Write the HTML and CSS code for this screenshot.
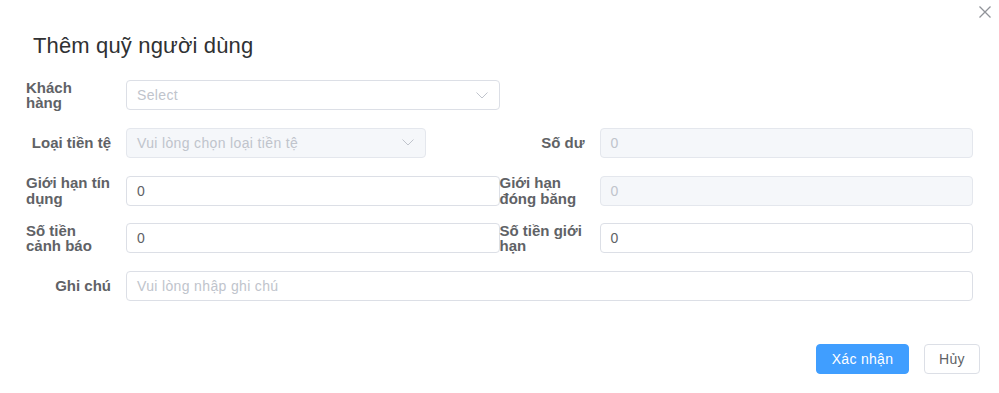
FILE: index.html
```html
<!DOCTYPE html>
<html lang="vi">
<head>
<meta charset="utf-8">
<title>Thêm quỹ người dùng</title>
<link rel="stylesheet" href="styles.css">
</head>
<body>
<div class="dialog">
  <button class="close" type="button" aria-label="Đóng">
    <svg width="12" height="12" viewBox="0 0 12 12"><path d="M0.5 0.5 L11.5 11.5 M11.5 0.5 L0.5 11.5" stroke="#909399" stroke-width="1.3" fill="none"/></svg>
  </button>
  <div class="header"><h2 class="title">Thêm quỹ người dùng</h2></div>
  <form class="form">
    <div class="item">
      <label class="label"><span>Khách hàng</span></label>
      <div class="control">
        <div class="input select"><span class="placeholder">Select</span>
          <svg class="chev" width="12" height="7" viewBox="0 0 12 7"><polyline points="0.5,0.5 6,6 11.5,0.5" fill="none" stroke="#c0c4cc" stroke-width="1"/></svg>
        </div>
      </div>
    </div>
    <div class="item"></div>

    <div class="item">
      <label class="label"><span>Loại tiền tệ</span></label>
      <div class="control">
        <div class="input select disabled narrow"><span class="placeholder">Vui lòng chọn loại tiền tệ</span>
          <svg class="chev" width="12" height="7" viewBox="0 0 12 7"><polyline points="0.5,0.5 6,6 11.5,0.5" fill="none" stroke="#c0c4cc" stroke-width="1"/></svg>
        </div>
      </div>
    </div>
    <div class="item">
      <label class="label"><span>Số dư</span></label>
      <div class="control"><div class="input disabled"><span class="placeholder">0</span></div></div>
    </div>

    <div class="item">
      <label class="label"><span>Giới hạn tín dụng</span></label>
      <div class="control"><div class="input"><span class="value">0</span></div></div>
    </div>
    <div class="item">
      <label class="label"><span>Giới hạn đóng băng</span></label>
      <div class="control"><div class="input disabled"><span class="placeholder">0</span></div></div>
    </div>

    <div class="item">
      <label class="label"><span>Số tiền cảnh báo</span></label>
      <div class="control"><div class="input"><span class="value">0</span></div></div>
    </div>
    <div class="item">
      <label class="label"><span>Số tiền giới hạn</span></label>
      <div class="control"><div class="input"><span class="value">0</span></div></div>
    </div>

    <div class="item full">
      <label class="label"><span>Ghi chú</span></label>
      <div class="control"><div class="input"><span class="placeholder">Vui lòng nhập ghi chú</span></div></div>
    </div>
  </form>
  <div class="footer">
    <button class="btn primary" type="button">Xác nhận</button>
    <button class="btn cancel" type="button">Hủy</button>
  </div>
</div>
</body>
</html>
```
FILE: styles.css
```css
* { box-sizing: border-box; }
html, body { margin: 0; padding: 0; background: #fff; }
body {
  font-family: "Liberation Sans", Arial, sans-serif;
  width: 999px;
  height: 393px;
  overflow: hidden;
}
.dialog {
  position: relative;
  width: 999px;
  height: 393px;
  background: #fff;
}
.close {
  position: absolute;
  top: 6px;
  left: 979px;
  width: 12px;
  height: 12px;
  padding: 0;
  border: 0;
  background: none;
  display: flex;
}
.header {
  padding: 34px 0 0 33px;
}
.title {
  margin: 0;
  font-size: 22px;
  line-height: 24px;
  font-weight: normal;
  color: #303133;
  letter-spacing: 0.15px;
}
.form {
  margin: 22px 0 0 26px;
  width: 947px;
  display: grid;
  grid-template-columns: 1fr 1fr;
  row-gap: 17.75px;
}
.item {
  display: flex;
  align-items: center;
  height: 30px;
}
.item.full { grid-column: 1 / -1; }
.label {
  flex: none;
  width: 100px;
  padding-right: 15px;
  display: flex;
  justify-content: flex-end;
  font-size: 15px;
  font-weight: bold;
  color: #606266;
  line-height: 15.5px;
}
.control { flex: 1; min-width: 0; }
.input {
  height: 30px;
  border: 1px solid #dcdfe6;
  border-radius: 4px;
  background: #fff;
  display: flex;
  align-items: center;
  padding: 0 10px;
  font-size: 14px;
  letter-spacing: 0.35px;
}
.input.narrow { width: 300px; }
.input.disabled { background: #f5f7fa; border-color: #e4e7ed; }
.placeholder { color: #c0c4cc; }
.value { color: #606266; }
.select { justify-content: space-between; padding-right: 11px; }
.chev { flex: none; }
.footer {
  margin-top: 43px;
  padding-right: 19px;
  display: flex;
  justify-content: flex-end;
  gap: 15px;
}
.btn {
  height: 30px;
  padding: 0;
  border: 1px solid #dcdfe6;
  border-radius: 4px;
  background: #fff;
  color: #606266;
  font-family: "Liberation Sans", Arial, sans-serif;
  font-size: 14px;
  letter-spacing: 0.3px;
}
.btn.cancel { width: 56px; }
.btn.primary {
  width: 93px;
  background: #409eff;
  border-color: #409eff;
  color: #fff;
}
```
